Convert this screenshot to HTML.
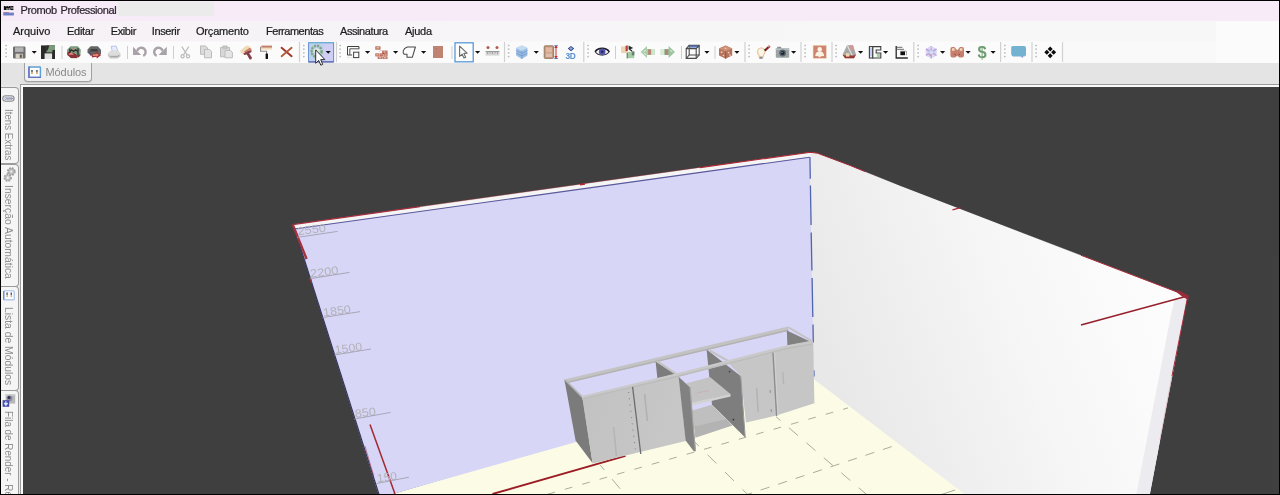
<!DOCTYPE html>
<html>
<head>
<meta charset="utf-8">
<title>Promob Professional</title>
<style>
html,body{margin:0;padding:0;}
body{width:1280px;height:495px;background:#000;overflow:hidden;position:relative;font-family:"Liberation Sans",sans-serif;}
.abs{position:absolute;}
#win{position:absolute;left:1px;top:1px;width:1278px;height:493px;background:#e5e5e5;overflow:hidden;will-change:transform;opacity:0.9999;}
#title{position:absolute;left:0;top:0;width:1278px;height:19.5px;background:#f7ecf7;}
#title .t{position:absolute;left:19.6px;top:2.9px;font-size:11px;line-height:13px;color:#2c2630;letter-spacing:-0.4px;word-spacing:1.2px;white-space:nowrap;}
#menu{position:absolute;left:0;top:19.5px;width:1278px;height:21px;background:linear-gradient(90deg,#f7f2f7,#f8f6f8 40%,#f8f8f8 70%);}
#menu span{position:absolute;top:4px;font-size:11px;line-height:13px;color:#1e1e1e;white-space:nowrap;}
#tb{position:absolute;left:0;top:40.5px;width:1278px;height:21.5px;background:#fafafa;}
#tabrow{position:absolute;left:0;top:62px;width:1278px;height:21.5px;background:#e5e5e5;}
#modtab{position:absolute;left:23.3px;top:61.5px;width:68px;height:19.3px;border:1px solid #a2a2a2;border-top:none;border-radius:0 0 4px 4px;background:#f1f1f1;box-sizing:border-box;box-shadow:0 1px 1px rgba(0,0,0,0.10);}
#modtab .tx{position:absolute;left:20.2px;top:3.5px;font-size:11px;line-height:13px;color:#8a8a8a;white-space:nowrap;letter-spacing:-0.08px;}
#side{position:absolute;left:0;top:83.5px;width:19px;height:410px;background:#e9e9e9;}
.vt{position:absolute;left:0;width:18px;background:#f6f6f6;border:1.3px solid #9c9c9c;border-left:none;border-radius:0 4px 4px 0;box-sizing:border-box;}
.vt .tx{position:absolute;left:13.6px;top:0;transform-origin:0 0;transform:rotate(90deg);font-size:11px;line-height:13px;color:#8e8e8e;white-space:nowrap;}
#vpframe{position:absolute;left:19px;top:83px;width:1260px;height:411px;background:#fafafa;border-left:1px solid #9c9c9c;border-top:1px solid #9c9c9c;box-sizing:border-box;}
#vp{position:absolute;left:22px;top:85.7px;width:1257px;height:408px;background:#404040;overflow:hidden;}
#title .t,#menu span,#modtab .tx,.vt .tx{filter:blur(0.35px);}
#title .t,#menu span{-webkit-text-stroke:0.22px currentColor;}
#tbsvg{filter:blur(0.3px);}
</style>
</head>
<body>
<div id="win">
  <div id="title">
    <svg class="abs" style="left:2.4px;top:3.7px" width="11.2" height="11" viewBox="0 0 13 13" preserveAspectRatio="none">
      <rect x="0" y="0" width="13" height="13" fill="#f6f0f6"/>
      <path d="M1 1.2h2v1h1v-1h1.6v1h1v-1H9v4.8H7.6V3.6h-1v2.4H5.2V3.6h-1v2.4H1z" fill="#111"/>
      <rect x="9.3" y="1.2" width="2.8" height="1.3" fill="#111"/><rect x="9.3" y="2.9" width="2.8" height="1.3" fill="#111"/><rect x="9.3" y="4.7" width="2.8" height="1.3" fill="#111"/>
      <rect x="0.5" y="8.2" width="6.5" height="1" fill="#d0706a"/>
      <rect x="0.3" y="9" width="12.4" height="3.4" fill="#6f80c8"/>
    </svg>
    <div class="abs" style="left:117px;top:1px;width:96px;height:13.5px;background:#ececec;"></div>
    <div class="t">Promob Professional</div>
  </div>
  <div id="menu">
    <span style="left:12px">Arquivo</span>
    <span style="left:66px;letter-spacing:-0.28px">Editar</span>
    <span style="left:109.7px;letter-spacing:-0.38px">Exibir</span>
    <span style="left:150.7px;letter-spacing:-0.36px">Inserir</span>
    <span style="left:195px;letter-spacing:-0.19px">Orçamento</span>
    <span style="left:265px;letter-spacing:-0.47px">Ferramentas</span>
    <span style="left:339px;letter-spacing:-0.42px">Assinatura</span>
    <span style="left:404px;letter-spacing:-0.28px">Ajuda</span>
  </div>
  <div id="tb"></div>
  <div class="abs" style="left:1215px;top:19.5px;width:63px;height:42.5px;background:#fcfcfc;"></div>
  <div id="tabrow"></div>
  <div id="modtab">
    <svg class="abs" style="left:3.2px;top:3.4px" width="13.4" height="12.4" viewBox="0 0 14 13">
      <rect x="1" y="1" width="12" height="11" rx="0.6" fill="#fdfdfd" stroke="#62a0d2" stroke-width="1.5"/>
      <path d="M1 0.4v11.6h12.6" fill="none" stroke="#6672c2" stroke-width="1.5"/>
      <rect x="3.4" y="4.2" width="1.5" height="2" fill="#444"/><rect x="8.6" y="4.2" width="1.5" height="2" fill="#444"/>
      <rect x="3.4" y="6.2" width="1.5" height="2.2" fill="#c89868"/><rect x="8.6" y="6.2" width="1.5" height="2.2" fill="#c89868"/>
    </svg>
    <div class="tx">Módulos</div>
  </div>
  <div id="side"></div>
  <div id="vpframe"></div>
  <div id="vp"></div>
  <!--SIDETABS-START-->
<div id="sidetabs" style="position:absolute;left:0;top:0;width:20px;height:493px;overflow:hidden;">
  <div class="vt" style="top:86px;height:77px;"><div class="tx" style="top:20.8px;transform:rotate(90deg) scaleX(0.885);">Itens Extras</div>
    <svg class="abs" style="left:1.2px;top:7px" width="13" height="7.5" viewBox="0 0 14 9" preserveAspectRatio="none"><rect x="0.8" y="0.9" width="12.2" height="6.6" rx="3.3" fill="none" stroke="#8a8a8a" stroke-width="1.1"/><rect x="2.8" y="2.6" width="8.4" height="3.2" rx="1.6" fill="none" stroke="#9a9ab0" stroke-width="1"/><path d="M4 4.2h8.4" stroke="#7f8fb8" stroke-width="0.9"/></svg>
  </div>
  <div class="vt" style="top:162.5px;height:123.5px;"><div class="tx" style="top:20.5px;transform:rotate(90deg) scaleX(0.942);">Inserção Automática</div>
    <svg class="abs" style="left:1.5px;top:2.6px" width="13.5" height="15.5" viewBox="0 0 13 15"><circle cx="8" cy="4.4" r="3.4" fill="#bdbdbd" stroke="#9c9c9c" stroke-width="1.7" stroke-dasharray="1.6 1.1"/><circle cx="8" cy="4.4" r="1.1" fill="#f3f3f3"/><circle cx="4.6" cy="10.4" r="3.2" fill="#c2c2c2" stroke="#a2a2a2" stroke-width="1.7" stroke-dasharray="1.6 1.1"/><circle cx="4.6" cy="10.4" r="1.1" fill="#f3f3f3"/></svg>
  </div>
  <div class="vt" style="top:285px;height:105px;"><div class="tx" style="top:19.8px;transform:rotate(90deg) scaleX(0.94);">Lista de Módulos</div>
    <svg class="abs" style="left:2.2px;top:3.4px" width="12.4" height="11.4" viewBox="0 0 13 12"><rect x="0.8" y="0.8" width="11" height="9.6" rx="1" fill="#fdfdfd" stroke="#a8c0e8" stroke-width="1.2"/><path d="M0.8 1v9.4" stroke="#5b84d6" stroke-width="1.2"/><rect x="3.6" y="2.6" width="1.4" height="2.6" fill="#555"/><rect x="8" y="2.6" width="1.4" height="2.6" fill="#555"/><rect x="3.6" y="5.4" width="1.4" height="2" fill="#c8a878"/><rect x="8" y="5.4" width="1.4" height="2" fill="#c8a878"/></svg>
  </div>
  <div class="vt" style="top:389px;height:120px;"><div class="tx" style="top:20.2px;transform:rotate(90deg) scaleX(0.895);">Fila de Render - Re</div>
    <svg class="abs" style="left:1px;top:1.6px" width="14" height="15" viewBox="0 0 14 15"><rect x="3.6" y="1" width="9.6" height="9.6" fill="#b9b9b9"/><rect x="3.6" y="1" width="9.6" height="1.6" fill="#d0d0d0"/><circle cx="7.6" cy="5.4" r="2.8" fill="#8e8e9a"/><circle cx="7" cy="4.6" r="1.5" fill="#2e2e6a"/><rect x="0.6" y="7.2" width="6.6" height="6.6" fill="#4a4aa8"/><path d="M3.9 8.2v3.2M2.2 10l1.7 2.2L5.6 10" stroke="#cfe6ff" stroke-width="1.3" fill="none"/></svg>
  </div>
</div>
<!--SIDETABS-END-->
  <!--TOOLBAR-START-->
<svg id="tbsvg" class="abs" style="left:0;top:0" width="1278" height="493" viewBox="1 1 1278 493">
<defs>
  <g id="grip"><rect x="0" y="0" width="1.6" height="1.4" fill="#b9b9b9"/><rect x="0" y="3.7" width="1.6" height="1.4" fill="#b9b9b9"/><rect x="0" y="7.4" width="1.6" height="1.4" fill="#b9b9b9"/><rect x="0" y="11.1" width="1.6" height="1.4" fill="#b9b9b9"/></g>
  <path id="dd" d="M0 0h5.2l-2.6 2.8z" fill="#111"/>
</defs>
<!-- toolbar strips subtle -->
<rect x="2" y="41.5" width="297" height="21" fill="#fcfcfc"/>
<rect x="300" y="41.5" width="36" height="21" fill="#fbfbfb"/>
<rect x="337" y="41.5" width="167" height="21" fill="#fcfcfc"/>
<rect x="505" y="41.5" width="78" height="21" fill="#fbfbfb"/>
<rect x="584" y="41.5" width="160" height="21" fill="#fcfcfc"/>
<rect x="746" y="41.5" width="316" height="21" fill="#fcfcfc"/>
<!-- grips -->
<use href="#grip" x="5.3" y="44.8"/><use href="#grip" x="303" y="44.8"/><use href="#grip" x="339.3" y="44.8"/><use href="#grip" x="507.8" y="44.8"/><use href="#grip" x="587.3" y="44.8"/><use href="#grip" x="748.3" y="44.8"/><use href="#grip" x="804.3" y="44.8"/><use href="#grip" x="835.3" y="44.8"/><use href="#grip" x="917.3" y="44.8"/><use href="#grip" x="1004" y="44.8"/><use href="#grip" x="1035.3" y="44.8"/>
<!-- separators short -->
<g stroke="#cfcfcf" stroke-width="1">
<path d="M62 46v13M127.5 46v13M173.5 46v13M452 46v13M615.5 46v13M681.5 46v13M715 46v13"/>
</g>
<g stroke="#d2d2d2" stroke-width="1.2">
<path d="M299.5 42v20M336.5 42v20M504.5 42v20M583.8 42v20M745 42v20M801 42v20M832 42v20M913.8 42v20M1000.6 42v20M1032 42v20M1062.5 42v20"/>
</g>
<!-- dropdown arrows -->
<use href="#dd" x="31.6" y="51"/><use href="#dd" x="325.5" y="51"/><use href="#dd" x="365" y="51"/><use href="#dd" x="393" y="51"/><use href="#dd" x="421" y="51"/><use href="#dd" x="475" y="51"/><use href="#dd" x="533.7" y="51"/><use href="#dd" x="704.3" y="51"/><use href="#dd" x="734.3" y="51"/><use href="#dd" x="791" y="51"/><use href="#dd" x="858" y="51"/><use href="#dd" x="883" y="51"/><use href="#dd" x="940" y="51"/><use href="#dd" x="965.5" y="51"/><use href="#dd" x="990.5" y="51"/>

<!-- 1 save -->
<g transform="translate(13,46.5)">
  <rect x="0" y="0" width="12.5" height="12" rx="1.2" fill="#6f6f6f"/>
  <rect x="2" y="0.8" width="8.5" height="4.6" fill="#b4b4b4"/>
  <rect x="2.6" y="7.2" width="7.2" height="4.8" fill="#d6d2c4"/>
  <rect x="6.8" y="8" width="2" height="3.4" fill="#5a5a5a"/>
</g>
<!-- 2 save as -->
<g transform="translate(41,45.4)">
  <rect x="0" y="0" width="14" height="13.6" fill="#2b2b2b"/>
  <rect x="5.2" y="0" width="8.8" height="7" fill="#7d9c7e"/>
  <path d="M5.2 0h3l-1 3.5-2 3z" fill="#2b2b2b"/>
  <rect x="3.6" y="8" width="7.6" height="5.6" fill="#e4e4e0"/>
  <rect x="11.4" y="4.6" width="2.6" height="9" fill="#2b2b2b"/>
</g>
<!-- 3 red/green -->
<g transform="translate(67,46)">
  <path d="M3.4 0.2h7.4l3 3.6-0.4 5-3.4 3.4H4L0.4 9 0 4z" fill="#7d9b82"/>
  <path d="M0.2 6.6l3-1 6.2 3 0.8 3.4H4L0.4 9z" fill="#8c3039"/>
  <path d="M1.4 8.8l2.6-3 3 3z" fill="#d9917a"/>
  <path d="M2.8 2.4v4.6M11 2.2v8" stroke="#2c2c2c" stroke-width="1.2" fill="none"/>
  <path d="M2.8 5.4l2-1.6 1.8 1.6 2-1.6 2.4 1.8" stroke="#2c2c2c" stroke-width="1.3" fill="none"/>
  <path d="M9.6 9.4l2 1.2 1.6-2" stroke="#8c3039" stroke-width="1.2" fill="none"/>
  <circle cx="5.4" cy="3" r="0.5" fill="#e09a70"/><circle cx="8" cy="2.4" r="0.5" fill="#e09a70"/><circle cx="12.4" cy="6" r="0.5" fill="#e09a70"/>
</g>
<!-- 4 dark/red arrow -->
<g transform="translate(87.2,46)">
  <path d="M3.4 0.2h7.2l3.2 3.6v3.4l-2 2.2H3.6L0.2 6.6 0.4 3.4z" fill="#666"/>
  <path d="M3.6 3h6.4l1 2.6H2.8z" fill="#404040"/>
  <path d="M2 5.6l2 4.4" stroke="#4a3a70" stroke-width="0.8"/>
  <path d="M4.4 8l4.6-0.6V5.8l5 3.2-4.4 3.4-0.4-1.6-4.4 0.6z" fill="#a0323b"/>
  <path d="M5.4 8.6l3.8-0.4 0.4-0.8 2 1.6-2.2 1.6-0.2-0.9-3.6 0.4z" fill="#e3957a"/>
</g>
<!-- 5 printer -->
<g transform="translate(107.5,46)">
  <path d="M3.6 0.4l5-0.4 2 5.6-5.6 0.6z" fill="#e8eefc" stroke="#9fb4e6" stroke-width="0.7"/>
  <path d="M0.4 7.4l3-2.6h7.2l2.4 3.2v2.6l-3 2H2.6L0.4 10z" fill="#c9c9c9"/>
  <path d="M0.4 7.4l3-2.6h7.2l2.4 3.2-3.4 1.6H2.8z" fill="#dedede"/>
  <path d="M3 10.6h6.6l2-1.2" stroke="#9a9a9a" stroke-width="0.8" fill="none"/>
</g>
<!-- undo -->
<g fill="#aaa4aa" stroke="none"><path d="M133 46.8V55H141.2z"/></g>
<path d="M137.2 50.8A4.3 4.3 0 1 1 143.2 55.9" fill="none" stroke="#aaa4aa" stroke-width="2.5"/>
<!-- redo -->
<g fill="#aaa4aa" stroke="none"><path d="M166.8 46.8V55H158.6z"/></g>
<path d="M162.6 50.8A4.3 4.3 0 1 0 156.6 55.9" fill="none" stroke="#aaa4aa" stroke-width="2.5"/>
<!-- cut -->
<g transform="translate(180.6,46.6)" fill="none" stroke="#bcbcbc" stroke-width="1.2">
  <path d="M1.2 0l5.4 8.4M8.2 0L2.8 8.4"/>
  <circle cx="2" cy="9.6" r="1.6"/><circle cx="7.4" cy="9.6" r="1.6"/>
</g>
<!-- copy -->
<g transform="translate(200,45.4)" fill="#dcdcdc" stroke="#bdbdbd" stroke-width="1">
  <path d="M0.5 0.5h5l2 2v6.4h-7z"/>
  <path d="M4.5 4h5l2 2v6.4h-7z" fill="#e4e4e4"/>
</g>
<!-- paste -->
<g transform="translate(220,45.4)" fill="#d8d8d8" stroke="#bdbdbd" stroke-width="1">
  <path d="M0.5 2h9v9.4h-9z"/>
  <rect x="3" y="0.6" width="4" height="2.2" fill="#c9c9c9"/>
  <path d="M5 5h5.4l2 2v5.4H5z" fill="#e6e6e6"/>
</g>
<!-- brush / stamp -->
<g transform="translate(240,45.4)">
  <path d="M0.2 5L6.6 0l3.6 1.2 0.8 3-6.4 4.4L1.2 8z" fill="#f1dcb8"/>
  <path d="M4 6l5.2-3.4 2 0.6 0.4 1.8-5.4 3.6z" fill="#c9826e"/>
  <path d="M3.4 8l4.6-2.2 3.4-0.6 0.2 1.4-2.4 1.2 2.8 4.6-0.6 1.4-1.8 0.2-2.8-5-2.8 0.6z" fill="#86404a"/>
</g>
<!-- roller -->
<g transform="translate(260,45.4)">
  <rect x="1.4" y="0.2" width="10.6" height="2.2" fill="#c4806a"/>
  <rect x="1.4" y="2.4" width="10.6" height="1.8" fill="#f3dcb8"/>
  <path d="M0.6 1.4v4.4h6v3" fill="none" stroke="#8c8c8c" stroke-width="1.1"/>
  <rect x="5.6" y="8.2" width="2.4" height="5.4" rx="0.6" fill="#111"/>
</g>
<!-- delete X -->
<g transform="translate(280.6,47)" stroke-linecap="round" fill="none">
  <path d="M1 0.8l10 8.4" stroke="#a5382c" stroke-width="2"/>
  <path d="M11 0.8L1 9.2" stroke="#b25c3a" stroke-width="1.8"/>
</g>
<!-- active button -->
<rect x="308.6" y="42.7" width="25" height="19.2" fill="#d0d0f7" stroke="#5f8fd0" stroke-width="1"/>
<rect x="309.1" y="43.2" width="14.5" height="18.2" fill="#b4d4e6" opacity="0.55"/>
<path d="M308.6 42.7h25" stroke="#6ab4d4" stroke-width="1.1"/>
<path d="M308.6 61.9h25" stroke="#5a5aa8" stroke-width="1.1"/>
<g transform="translate(310.4,45)">
  <ellipse cx="6.2" cy="6.4" rx="5" ry="5.6" fill="none" stroke="#86ad8e" stroke-width="2.6" stroke-dasharray="2.2 0.9"/>
  <ellipse cx="6.2" cy="6.4" rx="5" ry="5.6" fill="none" stroke="#6f8f86" stroke-width="0.8" stroke-dasharray="1.2 2.4"/>
  <ellipse cx="6.2" cy="5.6" rx="3" ry="2.4" fill="#d9ead9"/>
</g>
<use href="#dd" x="325.6" y="51"/>
<!-- mouse cursor -->
<path d="M315.7 49.9v13.4l3-2.9 2.1 4.8 1.9-0.8-2-4.8h4.2z" fill="#fff" stroke="#2e2e2e" stroke-width="1" stroke-linejoin="round"/>
<!-- rects -->
<g transform="translate(347,46)" fill="#fdfdfd" stroke="#444" stroke-width="1">
  <path d="M0.5 0.5h11.4v11.2h-11.4z" stroke="#ecd8c0" stroke-dasharray="1 1"/>
  <path d="M0.5 9V0.5h11.4v2.6M0.5 9h4.6" fill="none"/>
  <path d="M2.8 9V2.8h9" fill="none" stroke="#555"/>
  <rect x="6.6" y="6.2" width="5.2" height="5.4"/>
</g>
<!-- bricks -->
<g transform="translate(375,46)" fill="#c27a68" stroke="none">
  <rect x="0.2" y="0.2" width="5.4" height="3.6" rx="0.5"/>
  <rect x="7" y="4.4" width="5.6" height="3.6" rx="0.5"/>
  <rect x="0.2" y="7.2" width="4.2" height="3.2" rx="0.4"/><rect x="4.6" y="7.2" width="3.8" height="3.2" rx="0.4"/><rect x="8.6" y="7.6" width="4" height="2.8" rx="0.4"/>
  <rect x="2.6" y="10.6" width="4.6" height="2.4" rx="0.4"/><rect x="7.4" y="10.6" width="5.2" height="2.4" rx="0.4"/>
  <path d="M1.6 1.8h2.6M8.6 6h1.6M1.4 8.8h1.8M5.8 8.8h1.4M9.8 9h1.6M4 11.8h1.8M9 11.8h2" stroke="#f4e6dc" stroke-width="0.8"/>
  <path d="M4.2 5.4l2.6-1" stroke="#b8c0d8" stroke-width="0.8"/>
  <circle cx="6.2" cy="9" r="0.5" fill="#8a2438"/><circle cx="8.4" cy="7.2" r="0.5" fill="#8a2438"/>
</g>
<!-- shape -->
<g transform="translate(402,46.4)">
  <path d="M5.4 0.6h8l-3 10.2H5V7.8H2.2C0.2 6.4 0.8 2.2 5.4 0.6z" fill="#fdfdfd" stroke="#484848" stroke-width="1.05" stroke-linejoin="round"/>
</g>
<!-- square -->
<rect x="433" y="46" width="10" height="12" fill="#c28472"/>
<rect x="436" y="48" width="1" height="1" fill="#b06a5a"/>
<!-- selected button -->
<rect x="455" y="42.8" width="18.2" height="19" fill="#fefefe" stroke="#5a9ad8" stroke-width="1.3"/>
<path d="M459.6 46.2v10.2l2.5-2.2 1.9 3.8 1.7-0.8-1.8-3.8 3.2-0.2z" fill="#fdfdfd" stroke="#6d6d6d" stroke-width="1.1" stroke-linejoin="round"/>
<!-- measure -->
<g transform="translate(485.6,46)">
  <circle cx="2.4" cy="1.6" r="1.5" fill="#b65a50"/><circle cx="11.4" cy="1.6" r="1.5" fill="#b65a50"/>
  <rect x="0" y="5" width="13.8" height="4.6" fill="#d6d6d6"/>
  <rect x="0" y="5" width="13.8" height="1" fill="#9c9c9c"/>
  <path d="M2 6v2M4.5 6v1.4M7 6v2M9.5 6v1.4M12 6v2" stroke="#8a8a8a" stroke-width="0.7"/>
</g>
<!-- layers -->
<g transform="translate(516,45.4)">
  <path d="M5.8 0l5.6 2.6v7.4L5.8 13.6 0.2 10V2.6z" fill="#9dc0e6"/>
  <path d="M5.8 0l5.6 2.6-5.6 2.8L0.2 2.6z" fill="#c7dcf3"/>
  <path d="M0.2 5.2l5.6 2.8 5.6-2.8M0.2 7.8l5.6 2.8 5.6-2.8" stroke="#6f97cc" stroke-width="0.8" fill="none"/>
  <path d="M5.8 5.4v8.2" stroke="#7aa0d2" stroke-width="0.8"/>
</g>
<!-- cabinet with dims -->
<g transform="translate(543.8,45.4)">
  <rect x="0.4" y="0.4" width="9.4" height="12.6" rx="1" fill="#c59a7c" stroke="#8d6a55" stroke-width="0.8"/>
  <rect x="2" y="2" width="6.2" height="5" fill="#e2b8a4"/>
  <rect x="2" y="8" width="6.2" height="3.6" fill="#d9c0b0"/>
  <path d="M12.2 0.6v12" stroke="#c83030" stroke-width="1"/>
  <path d="M10.4 2.6l1.8-2.2 1.8 2.2zM10.4 10.6l1.8 2.2 1.8-2.2z" fill="#c83030"/>
  <path d="M10.6 0.4h3.4M10.6 13h3.4" stroke="#3848a8" stroke-width="0.9"/>
</g>
<!-- 3D -->
<g transform="translate(566,46)">
  <path d="M5 0l3.2 2.6L5 5.2 1.8 2.6z" fill="#2c3f86"/>
  <path d="M5 1l1.8 1.6L5 4 3.2 2.6z" fill="#8fb4e2"/>
  <text x="-0.4" y="12.8" font-family="Liberation Sans" font-weight="bold" font-size="8.4" fill="#5b90d0" letter-spacing="-0.4">3D</text>
</g>
<!-- eye -->
<g transform="translate(595,47.2)">
  <path d="M0.2 4.6C3 0.2 11.2 0.2 14.2 4.6 11.2 9 3 9 0.2 4.6z" fill="#f4f4f8" stroke="#3a3a4a" stroke-width="1.1"/>
  <path d="M0.2 4.4C3 0 11.2 0 14.2 4.4" fill="none" stroke="#20202c" stroke-width="1.6"/>
  <circle cx="7.2" cy="4.6" r="3.3" fill="#5656a6"/>
  <circle cx="7.2" cy="4.6" r="1.4" fill="#2c2c66"/>
</g>
<!-- boxes w/ arrow -->
<g transform="translate(620.6,44.8)">
  <rect x="0.4" y="1.6" width="6" height="6.6" fill="#ecd6b4"/>
  <rect x="5" y="0.8" width="2.2" height="5.6" fill="#b9403a"/>
  <path d="M8 0.6l4.6 2.6-2.8 1.2 2 1.4-0.6 1.2L8 4.4z" fill="#2a2a2a"/>
  <rect x="7.6" y="7" width="6" height="6.4" fill="#a6cfa8"/>
  <path d="M7.6 7l-1.6 1.6v5.2l1.6-0.4z" fill="#6e8f70"/>
  <rect x="11.2" y="6.6" width="2.6" height="4" fill="#6f7f70"/>
</g>
<!-- arrow left -->
<g transform="translate(640.6,46)">
  <path d="M0 6L6.4 0v3h7.8v6H6.4v3z" fill="#a9d0aa"/>
  <rect x="7.4" y="3.4" width="3" height="5.4" fill="#b78a74"/>
  <rect x="10.8" y="3" width="3.4" height="6" fill="#cfe8cf"/>
  <path d="M3 6l2.4-2M3.6 7.4l2 1.6" stroke="#e9f4e9" stroke-width="0.9"/>
</g>
<!-- arrow right -->
<g transform="translate(675,46) scale(-1,1)">
  <path d="M0 6L6.4 0v3h7.8v6H6.4v3z" fill="#9cc69e"/>
  <rect x="6.6" y="3.4" width="3.6" height="5.4" fill="#a98b78"/>
  <rect x="10.8" y="3" width="3.4" height="6" fill="#d6ecd6"/>
  <path d="M2.6 6l2.4-2" stroke="#e9f4e9" stroke-width="0.9"/>
</g>
<!-- wire cube -->
<g transform="translate(685.6,44.8)" fill="none" stroke="#4c4c4c" stroke-width="1.1">
  <path d="M3.6 0.6h10v9.6h-10z" fill="#fbfbfb"/>
  <path d="M3.6 0.6h10v2.2h-10z" fill="#5876b8" stroke="none"/>
  <path d="M0.6 3.8h10v9.8h-10z"/>
  <path d="M0.6 3.8l3-3.2M10.6 3.8l3-3.2M10.6 13.6l3-3.4M0.6 13.6l3-3.4"/>
</g>
<!-- textured cube -->
<g transform="translate(718.8,45.4)">
  <path d="M6.8 0l6.6 3v7l-6.6 3.4L0.2 10V3z" fill="#b8735f"/>
  <path d="M6.8 0l6.6 3-6.6 3L0.2 3z" fill="#cf9078"/>
  <path d="M6.8 6v7.4" stroke="#8c5444" stroke-width="0.8"/>
  <rect x="2" y="6" width="1.6" height="1.6" fill="#ecd2b2"/><rect x="4" y="9.4" width="1.4" height="1.4" fill="#ecd2b2"/><rect x="9" y="6.4" width="1.6" height="1.6" fill="#ecd2b2"/><rect x="10.6" y="9" width="1.4" height="1.4" fill="#ecd2b2"/><rect x="6" y="2.4" width="1.6" height="1.2" fill="#ecd2b2"/>
</g>
<!-- bulb -->
<g transform="translate(755.6,44.8)">
  <path d="M5 3.2a3.8 3.8 0 0 1 3 6.6l-0.4 2.2H3.6l-0.4-2.2a3.8 3.8 0 0 1 1.8-6.6z" fill="#fdf6e6" stroke="#ecc9a0" stroke-width="1.2"/>
  <rect x="3.8" y="12" width="3.2" height="2" fill="#8c8c8c"/>
  <path d="M9 4.4l4.4-4 1.6 1.6-4.4 4z" fill="#8f2222"/>
  <path d="M12 1.8l1.4-1.2 1 1-1.4 1.2z" fill="#d8a0a0"/>
  <path d="M8.4 5l0.8-0.8 1.6 1.6-1 0.8z" fill="#333"/>
</g>
<!-- camera -->
<g transform="translate(775.6,46.6)">
  <rect x="0.2" y="1.4" width="13.4" height="9.8" rx="1" fill="#9ca4a6"/>
  <rect x="0.2" y="1.4" width="13.4" height="2" fill="#b9c0c2"/>
  <rect x="1.6" y="0.2" width="4" height="1.6" fill="#8a9294"/>
  <circle cx="7" cy="6.4" r="3.4" fill="#5c6670"/>
  <circle cx="7" cy="6.4" r="2" fill="#20242c"/>
  <circle cx="6.4" cy="5.8" r="0.7" fill="#6f8fd0"/>
</g>
<!-- person -->
<g transform="translate(812.5,44.8)">
  <rect x="0" y="0" width="14.5" height="14.2" fill="#f7eed6"/>
  <rect x="0.8" y="0.8" width="12.9" height="12.6" fill="#cf8474"/>
  <circle cx="7.2" cy="4.6" r="2.3" fill="#fbf4e2"/>
  <path d="M2.8 11.2c0-3.4 2-4.6 4.4-4.6s4.4 1.2 4.4 4.6l-3 0.2-1.4 1.4-1.4-1.4z" fill="#fbf4e2"/>
</g>
<!-- icon gray/red -->
<g transform="translate(842,44.8)">
  <path d="M5 0.4h6l3 9.4-2 3.6H3L0.6 10z" fill="#a9a9a9"/>
  <path d="M7.4 0.4h3.6l1.4 5.4H8.6z" fill="#d09a98"/>
  <path d="M5.4 1l5 10" stroke="#e2e2e2" stroke-width="1.2"/>
  <path d="M0.6 10l2.4 3.4h9l2-3.6-2.2 0.8H3.4z" fill="#9e3a34"/>
  <rect x="4" y="8.4" width="3.4" height="3.4" fill="#ecd9b4"/>
</g>
<!-- panels -->
<g transform="translate(868.8,46)" fill="#fbfbfb" stroke="#3f3f3f" stroke-width="1.1">
  <rect x="0.6" y="0.6" width="3.4" height="11.4"/>
  <path d="M4 0.6h8v3.4H7.4v3h4.6v5H4z"/>
  <rect x="1.4" y="2" width="1.6" height="8.4" fill="#b8c8ee" stroke="none"/>
  <rect x="8" y="8" width="3.2" height="3.2" fill="#a8d0a8" stroke="none"/>
</g>
<!-- axes -->
<g transform="translate(895,46)">
  <path d="M1.2 0v12h11.6" fill="none" stroke="#2a2a2a" stroke-width="1.3"/>
  <path d="M2 1.4h5.4M2 3.4h7" stroke="#8a8a8a" stroke-width="1.1"/>
  <rect x="5.4" y="5.2" width="4.6" height="4" fill="#111"/>
  <path d="M5.4 5.2h6v4" fill="none" stroke="#8a8a8a" stroke-width="0.8"/>
</g>
<!-- snow -->
<g transform="translate(925,46)">
  <circle cx="6.2" cy="6.2" r="5.6" fill="#d6c9ef" opacity="0.75"/>
  <path d="M6.2 0v12.4M0.8 3l10.8 6.4M0.8 9.4L11.6 3" stroke="#b9a8e2" stroke-width="1.5"/>
  <circle cx="6.2" cy="6.2" r="2" fill="#cfe0f6"/>
  <circle cx="5" cy="9" r="0.8" fill="#d27a8a"/>
  <circle cx="6.4" cy="1.6" r="1.2" fill="#c3d6f4"/>
</g>
<!-- M -->
<g transform="translate(950,46.6)">
  <path d="M0.4 2.6a2 2 0 0 1 2-2.2h2L7.2 3.6 10 0.4h2a2 2 0 0 1 2 2.2V9a2 2 0 0 1-2 2H9.4L7.2 9.2 5 11H2.4a2 2 0 0 1-2-2z" fill="#c8806e"/>
  <rect x="2" y="1.6" width="2.6" height="2.6" fill="#f0d8b6"/><rect x="9.8" y="1.6" width="2.6" height="2.6" fill="#f0d8b6"/>
  <path d="M4.4 7.4l1.6 1M10 7.4l-1.6 1" stroke="#8c3c3c" stroke-width="0.9"/>
</g>
<!-- $ -->
<text x="977.4" y="58.2" font-family="Liberation Sans" font-weight="bold" font-size="16.5" fill="#6f9d72">$</text>
<!-- chat -->
<g transform="translate(1011,45.4)">
  <path d="M1.6 0.6h11.4a2 2 0 0 1 2 2v6.4a2 2 0 0 1-2 2h-1v1.6l-2.4-1.6H4.4l-1 0.2A3.4 3.4 0 0 1 0.2 7.6V2.4a1.6 1.6 0 0 1 1.4-1.8z" fill="#74b3d2"/>
  <path d="M9.4 10.6l2.4 1.8v-2z" fill="#a8a0d8"/>
</g>
<!-- diamonds -->
<g transform="translate(1050.2,52.3)" fill="#0c0c0c">
  <path d="M0-5.9l2.5 2.5L0-0.9l-2.5-2.5z"/>
  <path d="M0 0.9l2.5 2.5L0 5.9l-2.5-2.5z"/>
  <path d="M-5.9 0l2.5-2.5L-0.9 0l-2.5 2.5z"/>
  <path d="M0.9 0l2.5-2.5L5.9 0 3.4 2.5z"/>
</g>
</svg>
<!--TOOLBAR-END-->
  <!--SCENE-START-->
<div id="vp2" style="position:absolute;left:22px;top:85.7px;width:1257px;height:408px;overflow:hidden;">
<svg class="abs" style="left:-23px;top:-86.7px" width="1280" height="495" viewBox="0 0 1280 495">
<defs>
  <linearGradient id="rw" gradientUnits="userSpaceOnUse" x1="815" y1="340" x2="1120" y2="225">
    <stop offset="0" stop-color="#e9e9ea"/><stop offset="0.3" stop-color="#f0f0f1"/><stop offset="0.6" stop-color="#f7f7f7"/><stop offset="0.85" stop-color="#fbfbfb"/><stop offset="1" stop-color="#fdfdfd"/>
  </linearGradient>
  <linearGradient id="lf" gradientUnits="userSpaceOnUse" x1="585" y1="400" x2="690" y2="440">
    <stop offset="0" stop-color="#c3c3c3"/><stop offset="1" stop-color="#c9c9c9"/>
  </linearGradient>
</defs>
<!-- floor -->
<polygon points="385,496.2 600,433.2 813.6,376.5 816,376.5 972,496" fill="#fdfde7"/>
<!-- right wall -->
<polygon points="808.8,152.4 811,152.2 817.5,153.2 850,165.4 900,185.8 1187.5,296 1149.5,496 967,496 813.6,379 812,379" fill="url(#rw)"/>
<polygon points="1187.5,296 1174.6,299.6 1170.8,316 1136,496 1149.5,496" fill="#ececf1"/>
<!-- back wall: white stripe then lilac -->
<polygon points="292.8,224.6 810.6,152.2 811,158 296,231" fill="#f6f6f6"/>
<polygon points="294.4,228.7 809.6,156.9 813.8,379 600,435.2 385,496.2 379,496" fill="#d9d7f8"/>
<!-- blue top line -->
<path d="M294.4,229 L809.6,157.2" stroke="#5a5a9c" stroke-width="1.1" fill="none"/>
<!-- left edge dark line -->
<path d="M294,227 L379.5,496" stroke="#34345e" stroke-width="1.2" fill="none"/>
<!-- red lines -->
<path d="M292.8,224.6 L420,206.7" stroke="#a83040" stroke-width="1.3" fill="none"/>
<path d="M420,206.7 L700,167.3" stroke="#b02a36" stroke-width="0.8" fill="none" opacity="0.45"/>
<path d="M700,167.6 L810.6,152.2 L817.5,153.2" stroke="#b02a36" stroke-width="1.1" fill="none"/>
<path d="M580,184.6 l5,-0.7" stroke="#b02a36" stroke-width="1.8" fill="none"/>
<path d="M817.5,153.2 L850,165.4 L865,171.6" stroke="#a82a38" stroke-width="1" fill="none"/><path d="M1081,255.3 L1187.5,296" stroke="#a82a38" stroke-width="1" fill="none"/><path d="M865,171.6 L1081,255.3" stroke="#55454a" stroke-width="0.6" fill="none" opacity="0.5"/>
<path d="M1187.8,296 L1172,376" stroke="#a82a38" stroke-width="1" fill="none"/>
<path d="M1172,376 L1160,440" stroke="#a82a38" stroke-width="0.6" fill="none" opacity="0.4"/>
<path d="M1081,325 L1187.5,296" stroke="#96202c" stroke-width="1.4" fill="none"/>
<polygon points="1174.5,290.6 1179,290.4 1188.6,295.4 1188.4,300 1182,296.6" fill="#9c2c3a"/>
<path d="M952.5,209.8 L960.5,207.6" stroke="#a82a38" stroke-width="1.3" fill="none"/>
<path d="M292.8,224.6 L306.6,259" stroke="#a4323f" stroke-width="2.4" fill="none"/>
<path d="M310.5,279 l1,3.5" stroke="#a8323c" stroke-width="1.4" fill="none"/>
<path d="M365,446 L373.8,476" stroke="#b03a48" stroke-width="0.8" fill="none" opacity="0.7"/>
<path d="M370,424.5 L395,494" stroke="#a42a30" stroke-width="1.5" fill="none"/>
<!-- blue dashed corner line -->
<g stroke="#5066ae" stroke-width="1.3" fill="none">
<path d="M809.9,157 L810.3,178.8"/><path d="M810.4,185.6 L811.1,225"/><path d="M811.2,232.5 L811.9,270.6"/><path d="M812.1,278 L812.8,317"/><path d="M813,324.4 L813.3,342.6"/><path d="M813.9,370.3 L814,376.5"/>
</g>
<!-- labels -->
<g font-family="Liberation Sans" font-size="11.4" fill="#b3b3b9" lengthAdjust="spacingAndGlyphs">
<text transform="translate(298,235.2) rotate(-7.5)" textLength="28.5" lengthAdjust="spacingAndGlyphs">2550</text>
<text transform="translate(310.6,277.6) rotate(-7.5)" textLength="28.5" lengthAdjust="spacingAndGlyphs">2200</text>
<text transform="translate(323.5,316.4) rotate(-7.5)" textLength="28" lengthAdjust="spacingAndGlyphs">1850</text>
<text transform="translate(335.3,353.8) rotate(-7.5)" textLength="27.5" lengthAdjust="spacingAndGlyphs">1500</text>
<text transform="translate(355.3,417.8) rotate(-7.5)" textLength="21.3" lengthAdjust="spacingAndGlyphs">850</text>
<text transform="translate(377.6,482.3) rotate(-7.5)" textLength="20" lengthAdjust="spacingAndGlyphs">150</text>
</g>
<g stroke="#9c9ca8" stroke-width="0.8" fill="none">
<path d="M297,237.4 L337.6,231.4"/><path d="M309.6,278.8 L349.6,272.4"/><path d="M322.6,317.6 L360.2,311.6"/><path d="M334.4,355 L371,349"/><path d="M354.4,419 L390.6,412.4"/><path d="M376.6,483.5 L409,477.2"/>
</g>
<!-- floor dashed lines -->
<g stroke="#adad9e" stroke-width="1" fill="none">
<path d="M545,495 L848,407.9" stroke-dasharray="7.8 10.3" stroke-dashoffset="15.6"/>
<path d="M745.7,495 L899,444.2" stroke-dasharray="9.4 9" stroke-dashoffset="2.7"/>
<path d="M940,495 L955,490"/>
<path d="M600.3,465.2 L622,491" stroke-dasharray="12.5 12" stroke-dashoffset="6.2"/>
<path d="M694.5,441.8 L748,494.8" stroke-dasharray="12.5 12.1" stroke-dashoffset="6.2"/>
<path d="M776,416.7 L868,495.7" stroke-dasharray="12 11" stroke-dashoffset="6"/>
</g>
<!-- floor red line -->
<path d="M492.5,494 L625.5,455.8" stroke="#9d1d26" stroke-width="1.9" fill="none"/>
<g id="cab">
<!-- back rail -->
<polygon points="564.2,379.4 788,326.6 788.4,330.8 565,383.6" fill="#c4c4c4"/>
<polygon points="564.6,382.2 788.2,329.4 788.4,331 565,383.8" fill="#b4b4b4"/>
<!-- divider 2 dark face full -->
<polygon points="706.6,349.6 740.6,376 745.2,437.4 712,404.8" fill="#7f7f7f"/>
<!-- lower middle region -->
<polygon points="692,410.6 712,404.8 726,419 694,426.4" fill="#c0c0c0"/>
<polygon points="694,426.2 726,418.8 732.4,425.4 695.4,437.8" fill="#b4b4b4"/>
<!-- upper shelf -->
<polygon points="684,384 710,377 730.4,394 692,403" fill="#c4c4c4"/>
<polygon points="692,402.8 730.4,393.8 730.6,396.6 692,405.6" fill="#d3d3d3"/>
<!-- divider 1 triangle + right side triangle -->
<polygon points="655.6,361.6 675.4,374 657.4,378.4" fill="#7d7d7d"/>
<polygon points="786.8,330.6 810.6,341.8 787.4,345.6" fill="#828282"/>
<!-- top strips of dividers -->
<path d="M657,361.2 L676.6,374.4" stroke="#c3c3c3" stroke-width="2.2"/>
<path d="M709.4,350.4 L727.6,360.6" stroke="#c3c3c3" stroke-width="2.2"/>
<path d="M788.4,327.2 L812.2,341.2" stroke="#c2c2c2" stroke-width="1.7"/>
<!-- left outer dark panel -->
<polygon points="564.4,379.4 582.6,397.2 592.6,463.2 575.6,440.6" fill="#7c7c7c"/>
<path d="M565.2,380 L582.6,397.4" stroke="#b6b6b6" stroke-width="1.7"/>
<!-- left section face -->
<polygon points="582.4,398.6 678.8,376.2 685.8,441 592.6,463.4" fill="url(#lf)"/>
<!-- right section face -->
<polygon points="729,363.6 787,348.8 813.2,344.2 814.4,403.2 776.4,415.6 746,422.6 740.6,375.8" fill="#c7c7c7"/>
<!-- front rail -->
<polygon points="581.6,396 680,372.4 787,345.2 812.6,340.6 813,344.4 787,349 680,376.2 582.4,399.4" fill="#cacaca"/>
<polygon points="582.2,398.2 680,375 787,347.8 812.9,343.2 813,344.6 787,349.2 680,376.4 582.4,399.6" fill="#bcbcbc"/>
<!-- divider 1 protruding strip -->
<polygon points="678.6,376.8 690,387.4 695.8,451.2 693.8,451.2 685.6,440.4" fill="#828282"/>
<path d="M690,387.6 L695.4,450.8" stroke="#a4a4a4" stroke-width="1.2"/>
<!-- divider 2 front edge lighter -->
<path d="M740.8,376.4 L745.2,437" stroke="#9a9a9a" stroke-width="1"/>
<!-- door splits & details -->
<path d="M632.6,386.8 L640.8,454" stroke="#6e6e6e" stroke-width="1.3"/>
<path d="M628.6,392 L635.6,452" stroke="#8c8c8c" stroke-width="1.1" stroke-dasharray="1.1 5.2"/>
<path d="M644.6,394 L647.4,421" stroke="#b2b2b2" stroke-width="1.6"/>
<path d="M613.6,427 L616.4,456" stroke="#b6b6b6" stroke-width="1.6"/>
<path d="M773,352.6 L776.6,416" stroke="#8e8e8e" stroke-width="1.4"/>
<path d="M774.6,352.4 L778,415.4" stroke="#d2d2d2" stroke-width="0.9"/>
<path d="M756.6,388 L758.2,412" stroke="#b4b4b4" stroke-width="1.5"/>
<path d="M782.8,372 L783.6,384" stroke="#b6b6b6" stroke-width="1.4"/>
<path d="M770.2,390 l0.2,3 M771.2,409 l0.2,3" stroke="#999" stroke-width="1.2"/>
<circle cx="729.6" cy="371.6" r="0.9" fill="#44405a"/><circle cx="733.4" cy="419.6" r="0.9" fill="#3a2a4e"/>
<path d="M697,393 l12,-2.6" stroke="#c9a9ad" stroke-width="0.7"/>
</g>

</svg>
</div>
<!--SCENE-END-->
</div>
</body>
</html>
